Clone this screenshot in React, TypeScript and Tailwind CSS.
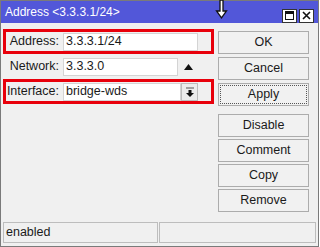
import React from 'react'

const font = { fontFamily: '"Liberation Sans", Arial, sans-serif' }

function Field({
  label,
  value,
  boxed,
  inputW,
  extra,
}: {
  label: string
  value: string
  boxed?: boolean
  inputW: string
  extra?: React.ReactNode
}) {
  return (
    <div
      className={`flex h-[25px] w-[211px] items-center border-[3px] ${
        boxed ? 'border-[#e8000b]' : 'border-transparent'
      }`}
    >
      <div className="w-[57px] pr-[4px] text-right text-[12.5px] text-[#1a1a1a]">{label}</div>
      <div
        className={`flex h-[18px] ${inputW} items-center border border-[#d4d4d4] bg-white pl-[2px] text-[12.5px] text-[#1a1a1a]`}
      >
        {value}
      </div>
      {extra}
    </div>
  )
}

function Btn({ children, focus }: { children: React.ReactNode; focus?: boolean }) {
  return (
    <div className="flex h-[23px] w-[91px] items-center justify-center border border-[#acacac] bg-[#f1f1f1]">
      <div
        className={`flex h-[19px] w-[87px] items-center justify-center text-[12.5px] text-[#1a1a1a] ${
          focus ? 'border border-dotted border-[#555]' : ''
        }`}
      >
        {children}
      </div>
    </div>
  )
}

export default function App() {
  return (
    <div className="relative h-[247px] w-[320px] bg-white" style={font}>
      <div className="flex h-[247px] w-[319px] flex-col border border-[#7a7a7a] bg-[#f0f0f0]">
        {/* title bar */}
        <div className="flex h-[22px] items-center bg-[#5257d9] pl-[4px] pr-[4px]">
          <span className="text-[12px] text-white">Address &lt;3.3.3.1/24&gt;</span>
          <div className="ml-auto flex gap-[2px] pt-[7px]">
            <div className="flex h-[14px] w-[15px] items-center justify-center border border-[#333] bg-white">
              <div className="h-[9px] w-[9px] border border-t-[3px] border-[#111]" />
            </div>
            <div className="flex h-[14px] w-[15px] items-center justify-center border border-[#333] bg-white">
              <svg width="9" height="9" viewBox="0 0 9 9">
                <path d="M1 1 L8 8 M8 1 L1 8" stroke="#111" strokeWidth="1.6" />
              </svg>
            </div>
          </div>
        </div>

        {/* body */}
        <div className="flex flex-1">
          <div className="flex flex-col pl-[2px] pt-[6px]">
            <Field label="Address:" value="3.3.3.1/24" boxed inputW="w-[135px]" />
            <Field
              label="Network:"
              value="3.3.3.0"
              inputW="w-[115px]"
              extra={
                <svg className="ml-[6px]" width="9" height="6" viewBox="0 0 9 6">
                  <path d="M0 6 L4.5 0 L9 6 Z" fill="#111" />
                </svg>
              }
            />
            <Field
              label="Interface:"
              value="bridge-wds"
              boxed
              inputW="w-[118px]"
              extra={
                <div className="flex h-[18px] w-[17px] items-center justify-center border border-[#bcbcbc] bg-[#ececec]">
                  <svg width="8" height="10" viewBox="0 0 8 10">
                    <path d="M0 1 H8" stroke="#555" strokeWidth="1" />
                    <path d="M2.5 3 H5.5 V6 H8 L4 10 L0 6 H2.5 Z" fill="#111" />
                  </svg>
                </div>
              }
            />
          </div>
          <div className="ml-auto mr-[9px] flex flex-col pt-[8px]">
            <div className="flex flex-col gap-[3px]">
              <Btn>OK</Btn>
              <Btn>Cancel</Btn>
              <Btn focus>Apply</Btn>
            </div>
            <div className="mt-[8px] flex flex-col gap-[2px]">
              <Btn>Disable</Btn>
              <Btn>Comment</Btn>
              <Btn>Copy</Btn>
              <Btn>Remove</Btn>
            </div>
          </div>
        </div>

        {/* status bar */}
        <div className="mx-[2px] mb-[3px] flex h-[21px]">
          <div className="flex w-[155px] items-center border border-[#bdbdbd] pl-[2px] text-[12.5px] text-[#1a1a1a]">
            enabled
          </div>
          <div className="ml-[1px] flex-1 border border-[#bdbdbd]" />
        </div>
      </div>

      {/* annotation arrow */}
      <svg className="absolute left-[215px] top-0" width="13" height="20" viewBox="0 0 13 20">
        <path d="M5 0 V11 H1.5 L6.5 18 L11.5 11 H8 V0 Z" fill="white" stroke="#111" strokeWidth="1.3" />
      </svg>
    </div>
  )
}
